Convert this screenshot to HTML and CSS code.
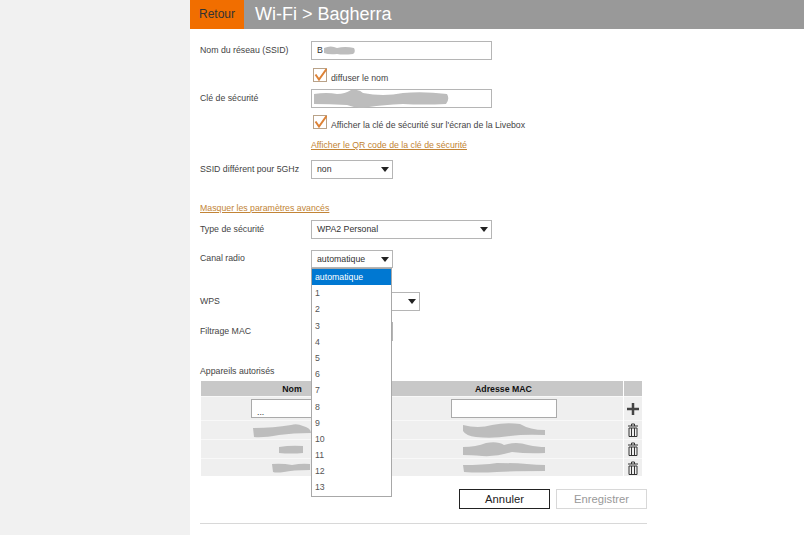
FILE: index.html
```html
<!DOCTYPE html>
<html lang="fr">
<head>
    <meta charset="UTF-8">
    <title>Wi-Fi &gt; Bagherra</title>
    <link rel="stylesheet" href="styles.css">
</head>
<body>
    <div class="page">
        <div class="header">
            <a class="back">Retour</a>
            <h1>Wi-Fi &gt; Bagherra</h1>
        </div>

        <div class="content">
            <div class="row row-ssid">
                <label>Nom du réseau (SSID)</label>
                <div class="field wide">B
                    <svg class="blur blur-ssid" width="32" height="9" viewBox="0 0 32 9"><path d="M1 2 Q8 -1 14 2 Q22 0 31 2 Q33 6 30 8 Q20 9 14 8 Q6 9 1 7 Z"/></svg>
                </div>
            </div>
            <div class="check-row row-diffuse">
                <span class="check"><svg width="14" height="14" viewBox="0 0 14 14"><path d="M2.500 6.500 L6 11.500 L13.500 1"/></svg></span>
                <span class="check-text">diffuser le nom</span>
            </div>
            <div class="row row-key">
                <label>Clé de sécurité</label>
                <div class="field wide">
                    <svg class="blur blur-key" width="136" height="18" viewBox="0 0 136 18"><path d="M1 4 Q14 2 24 4 Q32 4 38 0 Q46 -1 50 3 Q70 7 90 3 Q110 1 134 4 Q137 9 133 14 Q110 15 90 14 Q70 15 56 17 Q44 19 34 15 Q16 14 1 14 Z"/></svg>
                </div>
            </div>
            <div class="check-row row-show">
                <span class="check"><svg width="14" height="14" viewBox="0 0 14 14"><path d="M2.500 6.500 L6 11.500 L13.500 1"/></svg></span>
                <span class="check-text">Afficher la clé de sécurité sur l'écran de la Livebox</span>
            </div>
            <a class="link link-qr">Afficher le QR code de la clé de sécurité</a>
            <div class="row row-5g">
                <label>SSID différent pour 5GHz</label>
                <div class="field small arrow">non</div>
            </div>

            <a class="link link-hide">Masquer les paramètres avancés</a>
            <div class="row row-type">
                <label>Type de sécurité</label>
                <div class="field wide arrow">WPA2 Personal</div>
            </div>
            <div class="row row-canal">
                <label>Canal radio</label>
                <div class="select-wrap">
                    <div class="field small short arrow">automatique</div>
                    <ul class="dropdown">
                        <li class="selected">automatique</li>
                        <li>1</li><li>2</li><li>3</li><li>4</li><li>5</li><li>6</li>
                        <li>7</li><li>8</li><li>9</li><li>10</li><li>11</li><li>12</li><li>13</li>
                    </ul>
                </div>
            </div>
            <div class="row row-wps">
                <label>WPS</label>
                <div class="field medium arrow"></div>
            </div>
            <div class="row row-mac">
                <label>Filtrage MAC</label>
                <div class="field small"></div>
            </div>

            <div class="devices-title">Appareils autorisés</div>
            <div class="devices">
                <div class="cell head">Nom</div>
                <div class="cell head">Adresse MAC</div>
                <div class="cell head"></div>

                <div class="cell first"><div class="field cell-input cell-input-name">...</div></div>
                <div class="cell first"><div class="field cell-input"></div></div>
                <div class="cell first icon">
                    <svg width="14" height="14" viewBox="0 0 14 14"><path class="plus" d="M7 1 V13 M1 7 H13"/></svg>
                </div>

                <div class="cell blob-name-1"><svg class="blur" width="58" height="15" viewBox="0 0 58 15"><path d="M0 5 Q20 5 38 2 Q44 0 50 3 Q58 5 58 10 Q40 10 26 12 Q10 15 1 14 Z"/></svg></div>
                <div class="cell"><svg class="blur" width="84" height="17" viewBox="0 0 84 17"><path d="M1 3 Q16 7 30 3 Q44 0 58 2 Q68 8 83 8 V13 Q62 12 48 14 Q30 17 14 15 Q4 14 1 9 Z"/></svg></div>
                <div class="cell icon"><svg width="10" height="14" viewBox="0 0 10 14"><path class="trash" d="M0 3 H10 M3.500 3 V1 H6.500 V3 M1 5 H9 V13.500 H1 Z M3.500 5 V13 M6.500 5 V13"/></svg></div>

                <div class="cell"><svg class="blur" width="26" height="9" viewBox="0 0 26 9"><path d="M0 2 Q12 0 24 1 V8 Q12 9 0 8 Z"/></svg></div>
                <div class="cell"><svg class="blur" width="83" height="16" viewBox="0 0 83 16"><path d="M1 6 Q14 6 24 2 Q36 0 42 4 Q54 0 66 4 Q76 6 83 6 V12 Q66 13 50 11 Q34 16 20 15 Q8 14 1 14 Z"/></svg></div>
                <div class="cell icon"><svg width="10" height="14" viewBox="0 0 10 14"><path class="trash" d="M0 3 H10 M3.500 3 V1 H6.500 V3 M1 5 H9 V13.500 H1 Z M3.500 5 V13 M6.500 5 V13"/></svg></div>

                <div class="cell blob-name-3"><svg class="blur" width="38" height="11" viewBox="0 0 38 11"><path d="M0 2 Q10 1 20 3 Q30 1 38 2 V8 Q20 8 12 10 Q4 11 1 10 Z"/></svg></div>
                <div class="cell"><svg class="blur" width="82" height="10" viewBox="0 0 82 10"><path d="M0 2 Q20 2 34 0 Q50 0 64 1 Q74 2 82 2 V8 Q50 8 34 9 Q16 10 1 9 Z"/></svg></div>
                <div class="cell icon"><svg width="10" height="14" viewBox="0 0 10 14"><path class="trash" d="M0 3 H10 M3.500 3 V1 H6.500 V3 M1 5 H9 V13.500 H1 Z M3.500 5 V13 M6.500 5 V13"/></svg></div>
            </div>

            <div class="actions">
                <button class="btn btn-cancel">Annuler</button>
                <button class="btn btn-save">Enregistrer</button>
            </div>
            <div class="rule"></div>
        </div>
    </div>
</body>
</html>
```

FILE: styles.css
```css
html, body {
    margin: 0;
    padding: 0;
    height: 100%;
    overflow: hidden;
}
body {
    background-color: #f1f1f1;
    font-family: "Liberation Sans", Arial, sans-serif;
    font-size: 8.75px;
    color: #444;
}
.page {
    margin-left: 190px;
    height: 535px;
    background-color: #fff;
}
.header {
    display: flex;
    align-items: center;
    height: 29px;
    background-color: #999;
}
.back {
    width: 54px;
    height: 29px;
    line-height: 29px;
    text-align: center;
    background-color: #f16e00;
    color: #333;
    font-size: 12px;
}
.header h1 {
    margin: 0 0 0 11px;
    font-size: 18px;
    font-weight: normal;
    color: #fff;
}
.content {
    width: 447px;
    margin-left: 10px;
}
.row {
    display: flex;
    align-items: center;
}
.row label {
    width: 111px;
    flex: none;
    padding-bottom: 2px;
    box-sizing: border-box;
}
.row-ssid { padding-top: 12px; }
.row-key { margin-top: 7px; }
.row-5g { margin-top: 9px; }
.row-type { margin-top: 6px; }
.row-canal { margin-top: 11px; }
.row-wps { margin-top: 24px; }
.row-mac { margin-top: 11px; }

.field {
    position: relative;
    box-sizing: border-box;
    height: 19px;
    line-height: 17px;
    padding-left: 5px;
    border: 1px solid #b5b5b5;
    background-color: #fff;
    color: #333;
}
.wide { width: 181px; }
.small { width: 82px; }
.medium { width: 109px; }
.short { height: 18px; }
.arrow::after {
    content: "";
    position: absolute;
    right: 3px;
    top: 6px;
    border-left: 4px solid transparent;
    border-right: 4px solid transparent;
    border-top: 5px solid #222;
}
.blur {
    fill: #bdbdbd;
}
.blur-ssid {
    position: absolute;
    left: 11px;
    top: 4px;
}
.blur-key {
    position: absolute;
    left: 1px;
    top: 0;
}
.check-row {
    display: flex;
    align-items: center;
    margin-left: 113px;
    height: 14px;
}
.check-text {
    padding-top: 5px;
}
.row-diffuse { margin-top: 8px; }
.row-show { margin-top: 7px; }
.check {
    display: block;
    box-sizing: border-box;
    width: 14px;
    height: 14px;
    margin-right: 4px;
    border: 1px solid #b9a288;
    background-color: #fff;
}
.check svg {
    display: block;
    margin: -1px 0 0 -1px;
    fill: none;
    stroke: #dd8236;
    stroke-width: 2;
}
.link {
    display: block;
    color: #c28436;
    text-decoration: underline;
}
.link-qr {
    margin: 11px 0 0 111px;
    line-height: 11px;
}
.link-hide {
    margin-top: 24px;
    line-height: 11px;
}
.select-wrap {
    position: relative;
}
.dropdown {
    position: absolute;
    left: 0;
    top: 18px;
    z-index: 2;
    box-sizing: border-box;
    width: 81px;
    margin: 0;
    padding: 0;
    list-style: none;
    background-color: #fff;
    border: 1px solid #a8a8a8;
    color: #555;
}
.dropdown li {
    height: 16.2px;
    line-height: 16px;
    padding-left: 3px;
}
.dropdown .selected {
    background-color: #0078d2;
    color: #fff;
}
.devices-title {
    margin-top: 25px;
    line-height: 11px;
}
.devices {
    display: grid;
    grid-template-columns: 182px 239px 18px;
    grid-template-rows: 15px 24px 19px 19px 18px;
    column-gap: 1px;
    margin: 4px 0 0 1px;
    width: 441px;
}
.cell {
    display: flex;
    align-items: center;
    justify-content: center;
    background-color: #efefef;
    border-top: 1px solid #f8f8f8;
    box-sizing: border-box;
}
.head {
    background-color: #c8c8c8;
    border-top: 0;
    font-weight: bold;
    color: #111;
}
.cell-input {
    width: 106px;
    height: 19px;
    line-height: 24px;
    border-color: #aaa;
}
.cell-input-name {
    margin-left: 24px;
}
.blob-name-1 {
    justify-content: flex-start;
    padding-left: 52px;
}
.blob-name-3 {
    justify-content: flex-start;
    padding-left: 71px;
}
.plus {
    fill: none;
    stroke: #444;
    stroke-width: 2.5;
}
.trash {
    fill: none;
    stroke: #333;
    stroke-width: 1;
}
.actions {
    display: flex;
    justify-content: flex-end;
    gap: 6px;
    margin-top: 13px;
}
.btn {
    box-sizing: border-box;
    width: 91px;
    height: 20px;
    padding: 0;
    background-color: #fff;
    font-family: "Liberation Sans", Arial, sans-serif;
    font-size: 11.25px;
}
.btn-cancel {
    border: 1px solid #222;
    color: #222;
}
.btn-save {
    border: 1px solid #d8d8d8;
    color: #999;
}
.rule {
    height: 1px;
    margin-top: 14px;
    background-color: #d8d8d8;
}
```
